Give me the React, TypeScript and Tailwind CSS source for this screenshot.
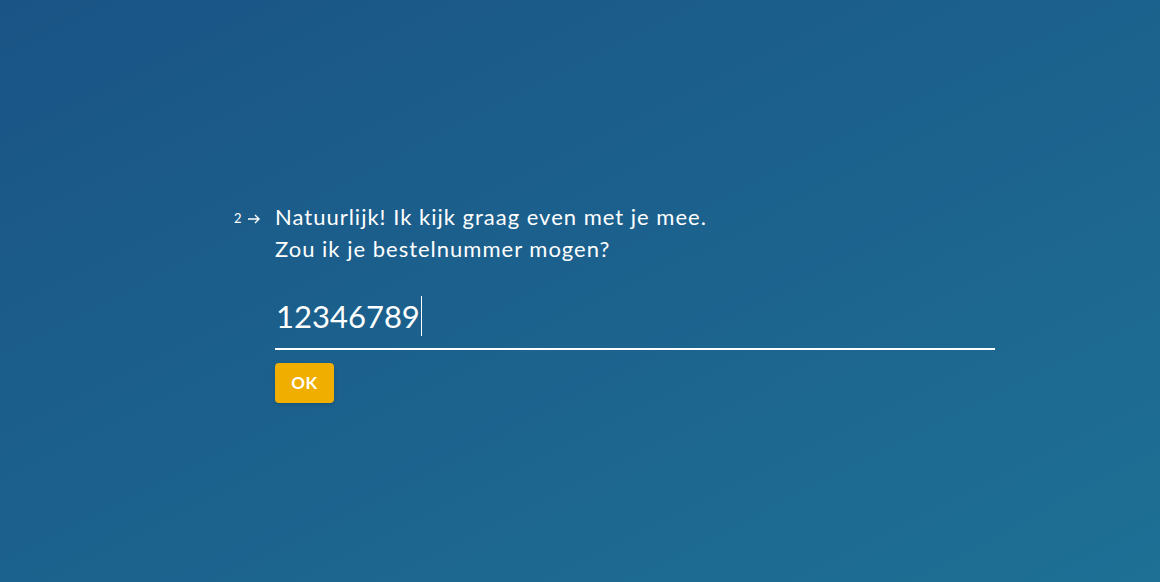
export default function App() {
  return (
    <div
      className="w-[1160px] h-[582px] overflow-hidden bg-gradient-to-br from-[#1a5486] to-[#1e7095]"
      style={{ fontFamily: 'Lato, "Open Sans", sans-serif' }}
    >
      <div className="w-[720px] ml-[275px] pt-[201px]">
        <div className="relative">
          <div className="absolute left-[-41px] top-[8px] flex items-center gap-[5px] text-white text-[13px]">
            <span>2</span>
            <svg width="14" height="14" viewBox="0 0 14 14" fill="none" stroke="white" strokeWidth="1.4">
              <path d="M1 7h11M8 3l4 4-4 4" />
            </svg>
          </div>
          <p className="text-white text-[22px] leading-[32px] tracking-[1px]">
            Natuurlijk! Ik kijk graag even met je mee.
            <br />
            Zou ik je bestelnummer mogen?
          </p>
        </div>

        <div className="mt-[31px] border-b-2 border-white pb-[12px] flex items-center">
          <span className="text-white text-[31px] leading-[40px] pl-px">12346789</span>
          <span className="w-px h-[40px] bg-white ml-[1px]" />
        </div>

        <button className="mt-[13px] w-[59px] h-[40px] rounded-[4px] bg-[#f0ae00] text-white font-bold text-[17px] tracking-[0.5px] shadow-[0_2px_4px_rgba(0,0,0,0.15)]">
          OK
        </button>
      </div>
    </div>
  )
}
